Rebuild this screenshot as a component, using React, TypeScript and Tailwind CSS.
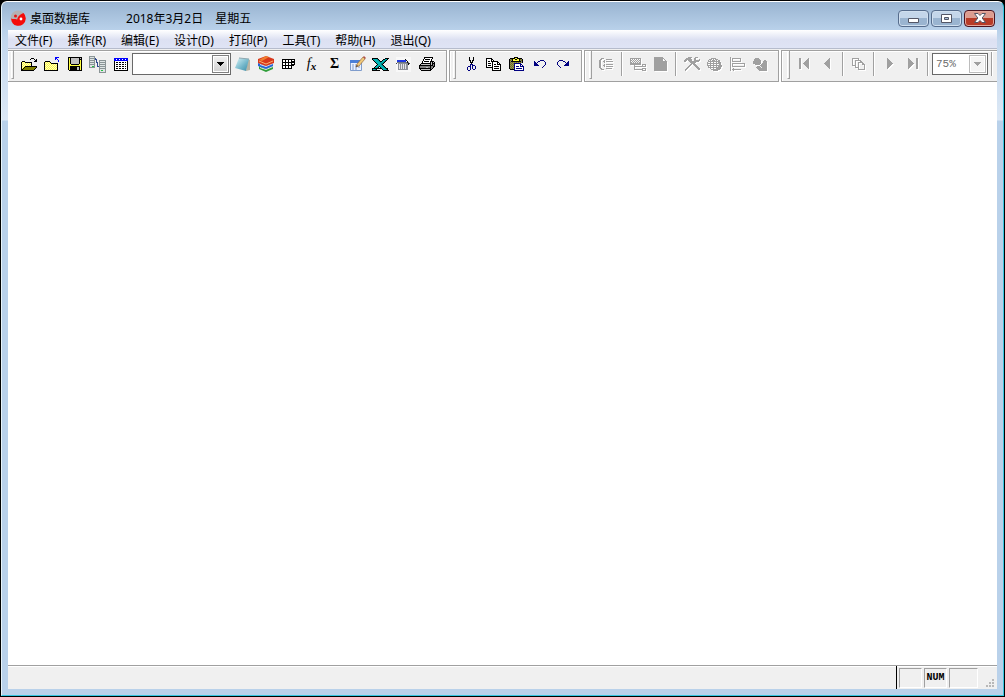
import React from 'react';

const palette: Record<string, string> = {
  k: '#000000',
  w: '#ffffff',
  y: '#ffff40',
  c: '#fdf8c8',
  o: '#808000',
  g: '#c0c0c0',
  d: '#808080',
  b: '#0000ff',
  n: '#000080',
  x: '#a0a0a0',
  t: '#008080',
  a: '#00b4b4',
};

// small bitmap icons, one character per pixel
const Pixels = ({ rows, className = '' }: { rows: string[]; className?: string }) => {
  const width = Math.max(...rows.map((r) => r.length));
  return (
    <svg
      width={width}
      height={rows.length}
      viewBox={`0 0 ${width} ${rows.length}`}
      shapeRendering="crispEdges"
      className={`shrink-0 ${className}`}
      aria-hidden="true"
    >
      {rows.map((row, y) =>
        [...row].map((ch, x) =>
          palette[ch] ? <rect key={`${x}-${y}`} x={x} y={y} width="1" height="1" fill={palette[ch]} /> : null
        )
      )}
    </svg>
  );
};

const openRows = [
  '..........kkk...',
  '.........k...k.k',
  '..............kk',
  '.kkk.........kkk',
  'kycykkkkkkk.....',
  'kcycycycyck.....',
  'kycycycycyk.....',
  'kcycycycyck.....',
  'kycykkkkkkkkkkkk',
  'kcykoooooooooook',
  'kykoooooooooook.',
  'kkoooooooooook..',
  'kkkkkkkkkkkkk...',
];

const folderRows = [
  '...........bbbb',
  '...........bb..',
  '...........b.b.',
  '..............b',
  '.kkkkk........b',
  'kycycyk........',
  'kcycycykkkkkkk.',
  'kycycycycycyck.',
  'kcycycycycycyk.',
  'kycycycycycyck.',
  'kcycycycycycyk.',
  'kycycycycycyck.',
  'kcycycycycycyk.',
  'kkkkkkkkkkkkkk.',
];

const saveRows = [
  'kkkkkkkkkkkkkk',
  'kykggggggggkgk',
  'kykggggggggkkk',
  'kykggggggggkyk',
  'kykggggggggkyk',
  'kykggggggggkyk',
  'kykggggggggkyk',
  'kyykkkkkkkkyyk',
  'kyyyyyyyyyyyyk',
  'kykkkkkkkkkkyk',
  'kykkkkkkkggkyk',
  'kykkkkkkkggkyk',
  'kykkkkkkkggkyk',
  '.kkkkkkkkkkkkk',
];

const tableRows = [
  'bbbbbbbbbbbbbb',
  'bbwbbwbbwbbwbb',
  'bbbbbbbbbbbbbb',
  'kwwwwwwwwwwwwk',
  'kwkkwkkwkkwkwk',
  'kwwwwwwwwwwwwk',
  'kwkkwkkwkkwkwk',
  'kwwwwwwwwwwwwk',
  'kwkkwkkwkkwkwk',
  'kwwwwwwwwwwwwk',
  'kwkkwkkwkkwkwk',
  'kwwwwwwwwwwwwk',
  'kkkkkkkkkkkkkk',
];

const gridRows = [
  'kkkkkkkkkkkkk',
  'kwwkwwkwwkwwk',
  'kwwkwwkwwkkkk',
  'kkkkkkkkkkkkk',
  'kwwkwwkwwkwwk',
  'kwwkwwkwwkkkk',
  'kkkkkkkkkkkk.',
  'kwwkwwkwwk...',
  'kwwkwwkwwk...',
  'kkkkkkkkkk...',
];

const cutRows = [
  '...k...k..',
  '...k...k..',
  '...k...k..',
  '...kk.kk..',
  '....k.k...',
  '....kkk...',
  '.....k....',
  '....nnn...',
  '....n.nnn.',
  '..nnn.n..n',
  '.n..n.n..n',
  '.n..n.n..n',
  '.n..n..nn.',
  '..nn......',
];

const copyRows = [
  'kkkkkk.........',
  'kwwwwkk........',
  'kwwwwkwk.......',
  'kwkkwkkkkkkk...',
  'kwwwwwkwwwwkk..',
  'kwkkkwkwwwwkwk.',
  'kwwwwwkwkkwkkkk',
  'kwkkkwkwwwwwwwk',
  'kwwwwwkwkkkkkwk',
  'kkkkkkkwwwwwwwk',
  '......kwkkkkkwk',
  '......kwwwwwwwk',
  '......kkkkkkkkk',
];

const pasteRows = [
  '.....kkkk.......',
  '.kkkkkyykkkkk...',
  'kdokyykkyykodk..',
  'kodkyyyyyykdok..',
  'kdkkkkkkkkkkdk..',
  'kododododododk..',
  'kdodonnnnnnn....',
  'kododnwwwwwnn...',
  'kdodonwwwwwnwn..',
  'kododnwnnnwnnnn.',
  'kdodonwwwwwwwwn.',
  'kododnwnnnnnnwn.',
  '.kkkknwwwwwwwwn.',
  '.....nnnnnnnnnn.',
];

const undoRows = [
  '......nnnn..',
  'n...nn....n.',
  'nn.n.......n',
  'nnn........n',
  'nnnn.......n',
  'nnnnn.....n.',
  '.........n..',
  '........n...',
];

const printerRows = [
  '.....kkkkkkkkk..',
  '.....kwwwwwwwk..',
  '....kwkkkkkwk...',
  '....kwwwwwwwk...',
  '...kwkkkkkwkkkk.',
  '...kwwwwwwwkgkgk',
  '..kkkkkkkkkkgkkk',
  '.kgggggggggkgkdk',
  'kkkkkkkkkkkkkkdk',
  'kddddddddddkddkk',
  'kddddddggddkddk.',
  'kkkkkkkkkkkkdk..',
  '.kgggggggggkk...',
  '..kkkkkkkkkk....',
];

const excelRows = [
  'kkkkkk.......kkkk',
  'kaaaatk....kkaak.',
  '.kaaaatk..kaatk..',
  '..kaaaatkkaatk...',
  '...kaaaataatk....',
  '....kaaaattk.....',
  '.....kaaatk......',
  '....kaaaaatk.....',
  '...kaatkaaatk....',
  '..kaatk.kaaatk...',
  'kkkkkkkkkkaaatkk.',
  'kaatk.....kaaatk.',
  'kkkkkkkk...kkkkkk',
];

const outlineRows = [
  '..xxx..........',
  '.xx....xxxxxx..',
  'xx...x.........',
  'xx..xx.xxxxxxx.',
  'xx...x.........',
  'xx.............',
  'xx...x.xxxxxxx.',
  'xx..xx.........',
  'xx...x.xxxxxxx.',
  'xx.............',
  '.xx....xxxxxx..',
  '..xxx..........',
];

const relationRows = [
  'xxxxxxxxxxx.....',
  'x.x.x.x.x.x.....',
  'xx.x.x.x.xx.....',
  'x.x.x.x.x.x.....',
  'xx.x.x.x.xx.....',
  'xxxxxxxxxxx.....',
  'xxxxxxxxxxx.xxxx',
  '....x.......x..x',
  '....xxxxxxxxxxxx',
  '....x...........',
  '....x.......xxxx',
  '....xxxxxxxxx..x',
  '............xxxx',
];

const pageRows = [
  'xxxxxxxxx....',
  'xxxxxxxxxx...',
  'xxxxxxxxx.x..',
  'xxxxxxxxx..x.',
  'xxxxxxxxxxxxx',
  'xxxxxxxxxxxxx',
  'xxxxxxxxxxxxx',
  'xxxxxxxxxxxxx',
  'xxxxxxxxxxxxx',
  'xxxxxxxxxxxxx',
  'xxxxxxxxxxxxx',
  'xxxxxxxxxxxxx',
  'xxxxxxxxxxxxx',
  'xxxxxxxxxxxxx',
];

const toolsRows = [
  '....xxxx...xxx..',
  '..xxxxx...xx....',
  '.xxxxxxx..xx...x',
  'xxx.xxxx..xxxxxx',
  'xx...xxxxxxxxxx.',
  '......xxxxxx....',
  '.......xxxx.....',
  '......xx.xxx....',
  '.....xx...xxx...',
  '....xx.....xxx..',
  '...xx.......xxx.',
  '..xx.........xxx',
  '.xx...........xx',
  '.x..............',
];

const globeRows = [
  '....xxxxx......',
  '..xxx.x.xxx....',
  '.x.x.xxx.x.xx..',
  '.xxxxxxxxxxxx..',
  'x..x..x..x.xxx.',
  'xxxxxxxxxxxxxx.',
  'x..x..x..x..xx.',
  'xxxxxxxxxxxxxxx',
  '.x.x..x..x.xxxx',
  '.xxxxxxxxxxxxx.',
  '...x..x..xxxxx.',
  '....xxxxxxxxx..',
  '......xxxxx....',
];

const alignRows = [
  'x..............',
  'x.xxxxxxxxx....',
  'x.x.......x....',
  'x.x.......x....',
  'x.xxxxxxxxx....',
  'x..............',
  'x.xxxxxxxxxxxxx',
  'x.x...........x',
  'x.x...........x',
  'x.xxxxxxxxxxxxx',
  'x..............',
  'x..x...........',
  'x.xxxxxxxxx....',
  'x..x...........',
];

const shapesRows = [
  '..xxxx.........',
  '.xxxxxx........',
  '.xxxxxxx...xx..',
  'xxxxxxxx..xxxx.',
  'xxxxxxxx..xxxx.',
  'xxxxxxxx.xxxxx.',
  '..xxxxx.xxxxxx.',
  '.......xxxxxxx.',
  '....xxx.xxxxxx.',
  '...xxxxx.xxxxx.',
  '....xxxxxxxxxx.',
  '.....xxxxxxxxx.',
  '......xxxxxxxx.',
];

const pagesRows = [
  'xxxxxxx.......',
  'x.....x.......',
  'x..xxxxxx.....',
  'x..x....xx....',
  'x..x..xxxxx...',
  'x..x..x...xx..',
  'x..x..x...xxx.',
  'xxxx..x.....x.',
  '...x..x.....x.',
  '...xxxx.....x.',
  '......x.....x.',
  '......xxxxxxx.',
];

const emboss = 'drop-shadow-[1px_1px_0_#ffffff]';

const YinYang = () => (
  <svg width="16" height="16" viewBox="0 0 16 16" className="shrink-0" aria-hidden="true">
    <circle cx="8" cy="8" r="7.5" fill="#b4b0b2" />
    <path d="M13.5 3A7.5 7.5 0 1 1 2 12.500C4 14 6.500 13 7 10.500C7.500 7 9 5 13.500 3Z" fill="#f40c0c" />
    <path d="M1 8.500C3 9.500 5 8.500 7 9.500L8 13.500L4 14.200A7.500 7.500 0 0 1 1 8.500Z" fill="#f40c0c" />
    <circle cx="5.500" cy="6" r="1.500" fill="#e01818" />
    <circle cx="11" cy="9" r="1.400" fill="#ffffff" />
  </svg>
);

const Servers = () => (
  <svg width="17" height="17" viewBox="0 0 17 17" shapeRendering="crispEdges" aria-hidden="true">
    <path d="M0 0h6v12H0z" fill="#8a9496" />
    <path d="M1 1h4v1H1zM1 3h4v1H1zM1 5h4v1H1zM1 7h4v1H1zM1 9h4v2H1z" fill="#dfe5e5" />
    <path d="M10 4h7v13h-7z" fill="#8a9496" />
    <path d="M11 5h5v1h-5zM11 7h5v1h-5zM11 9h5v1h-5zM11 11h5v1h-5zM11 13h5v3h-5z" fill="#dfe5e5" />
    <path d="M3 10h2v1H3zM12 14h2v1h-2z" fill="#20c040" />
    <path d="M6 2h1v1h1v3h1v4h1v1H8V7H7V4H6z" fill="#304a90" />
  </svg>
);

const Notepad = () => (
  <svg width="16" height="15" viewBox="0 0 16 15" aria-hidden="true">
    <defs>
      <linearGradient id="note" x1="0" y1="0" x2="1" y2="1">
        <stop offset="0" stopColor="#d8f4f8" />
        <stop offset="0.6" stopColor="#6fb4c8" />
        <stop offset="1" stopColor="#3f8ca6" />
      </linearGradient>
    </defs>
    <path d="M13 2l2 1v10l-4 1z" fill="#b8b4a4" />
    <path d="M4 1l10 1-3 12L0 11z" fill="url(#note)" />
    <path d="M4 1l10 1" stroke="#8fa8b0" />
  </svg>
);

const Books = () => (
  <svg width="16" height="16" viewBox="0 0 16 16" aria-hidden="true">
    <path d="M1 10l7 3 7-3v3l-7 3-7-3z" fill="#2f9e3a" />
    <path d="M2 11l6 2 7-3v1l-7 3-6-2z" fill="#e8f0e0" />
    <path d="M0 7l8 3 7-3v3l-7 3-8-3z" fill="#2465d8" />
    <path d="M2 8l6 2 7-3v1l-7 3-6-2z" fill="#dfe8f8" />
    <path d="M0 3l8-3 8 3v4l-8 3-8-3z" fill="#d8381c" />
    <path d="M1 5l7 3 7-3" fill="none" stroke="#f8b070" />
    <path d="M8 0l3 1-7 4-3-1z" fill="#f08030" />
  </svg>
);

const EditTable = () => (
  <svg width="17" height="16" viewBox="0 0 17 16" aria-hidden="true">
    <path d="M1.500 4.500h11v10h-11z" fill="#eaf2ff" stroke="#7f9ccc" />
    <path d="M1 4h12v3H1z" fill="#4a80d8" />
    <path d="M3 9h8M3 11h8M3 13h6" stroke="#7f9ccc" strokeDasharray="2 1" />
    <path d="M7 11l1-3 6-7 2 2-6 7z" fill="#f0c878" stroke="#8a5a30" strokeWidth="0.6" />
    <path d="M14 1l1-1 2 2-1 1z" fill="#b05048" />
    <path d="M7 11l1-2 1 1z" fill="#303030" />
  </svg>
);

const Basket = () => (
  <svg width="15" height="15" viewBox="0 0 15 15" shapeRendering="crispEdges" aria-hidden="true">
    <path d="M0 0h15v15H0z" fill="#f8f8f8" />
    <path d="M1 3h9v2H1z" fill="#2038e0" />
    <path d="M1 5h12v1H1z" fill="#707880" />
    <path d="M2 6h10v7H2z" fill="#8c9098" />
    <path d="M3 7h1v5H3zM5 7h1v5H5zM7 7h1v5H7zM9 7h1v5H9z" fill="#e4e4e8" />
    <path d="M9 2h1v1h1v1h1v2h1v2h-1V6h-1V4h-1V3H9z" fill="#101010" />
    <path d="M0 6h1v1H0zM13 6h1v1h-1z" fill="#404040" />
  </svg>
);

const Arrow = ({ left = false, bar = false }: { left?: boolean; bar?: boolean }) => (
  <svg
    width="11"
    height="12"
    viewBox="0 0 11 12"
    shapeRendering="crispEdges"
    className={emboss}
    fill="#a0a0a0"
    aria-hidden="true"
  >
    {left ? (
      <path d={bar ? 'M0 0h2v11H0zM10 0v11L4 6V5z' : 'M8 0v11L2 6V5z'} />
    ) : (
      <path d={bar ? 'M9 0h2v11H9zM1 0v11l6-5V5z' : 'M3 0v11l6-5V5z'} />
    )}
  </svg>
);

type Tool = { name: string; icon: React.ReactNode };

const fileTools: Tool[] = [
  { name: '打开', icon: <Pixels rows={openRows} /> },
  { name: '关闭', icon: <Pixels rows={folderRows} /> },
  { name: '保存', icon: <Pixels rows={saveRows} /> },
  { name: '连接', icon: <Servers /> },
  { name: '数据表', icon: <Pixels rows={tableRows} /> },
];

const dataTools: Tool[] = [
  { name: '记事本', icon: <Notepad /> },
  { name: '资料', icon: <Books /> },
  { name: '表格', icon: <Pixels rows={gridRows} /> },
  {
    name: '函数',
    icon: (
      <span className="flex items-end font-['Liberation_Serif',serif] text-sm leading-4 italic">
        f<span className="text-[11px] leading-3 font-bold">x</span>
      </span>
    ),
  },
  { name: '求和', icon: <span className="font-['Liberation_Serif',serif] text-sm leading-4 font-bold">Σ</span> },
  { name: '编辑表', icon: <EditTable /> },
  { name: '导出', icon: <Pixels rows={excelRows} /> },
  { name: '清理', icon: <Basket /> },
  { name: '打印', icon: <Pixels rows={printerRows} /> },
];

const editTools: Tool[] = [
  { name: '剪切', icon: <Pixels rows={cutRows} /> },
  { name: '复制', icon: <Pixels rows={copyRows} /> },
  { name: '粘贴', icon: <Pixels rows={pasteRows} /> },
  { name: '撤消', icon: <Pixels rows={undoRows} /> },
  { name: '重做', icon: <Pixels rows={undoRows} className="-scale-x-100" /> },
];

const menus = ['文件(F)', '操作(R)', '编辑(E)', '设计(D)', '打印(P)', '工具(T)', '帮助(H)', '退出(Q)'];

const ToolButton = ({ name, icon, disabled = false }: Tool & { disabled?: boolean }) => (
  <button type="button" aria-label={name} disabled={disabled} className="flex h-6 w-[23px] shrink-0 items-center justify-center">
    {icon}
  </button>
);

const Separator = () => (
  <div className="flex h-6 w-2 shrink-0 justify-center">
    <div className="w-0.5 border-r border-l border-r-white border-l-[#a0a0a0]" />
  </div>
);

const ToolGroup = ({ className = '', children }: { className?: string; children: React.ReactNode }) => (
  <div className={`flex h-8 items-start border border-[#a0a0a0] bg-[#f0f0f0] shadow-[inset_1px_1px_0_#ffffff] ${className}`}>
    <div className="mx-[3px] h-7 w-[3px] shrink-0 border-r border-b border-l border-[#a0a0a0] border-l-white" />
    <div className="flex items-center pt-px">{children}</div>
  </div>
);

const Combo = ({ label, value, className, disabled = false }: { label: string; value: string; className: string; disabled?: boolean }) => (
  <div className={`relative h-[22px] shrink-0 border border-[#696969] bg-white ${className}`}>
    <select
      aria-label={label}
      disabled={disabled}
      className="block h-full w-full appearance-none pl-[3px] font-['Liberation_Mono','Noto_Sans_CJK_SC',monospace] text-[11px] text-[#6d6d6d] outline-none"
    >
      <option>{value}</option>
    </select>
    <span
      className={`pointer-events-none absolute top-px right-px flex h-[18px] w-[17px] items-center justify-center border inset-ring inset-ring-white ${
        disabled ? 'border-[#bcbcbc] bg-[#f4f4f4]' : 'border-[#808080] bg-linear-to-b from-[#f2f2f2] to-[#d0d0d0]'
      }`}
    >
      <svg width="7" height="4" viewBox="0 0 7 4" shapeRendering="crispEdges" aria-hidden="true">
        <path d="M0 0h7L4 4H3z" fill={disabled ? '#a0a0a0' : '#000000'} />
      </svg>
    </span>
  </div>
);

const TitleBar = () => (
  <header className="flex h-7 items-center px-0.5 pt-1">
    <YinYang />
    <h1 className="flex pt-0.5 pl-1 text-xs leading-4">
      <span className="mr-9">桌面数据库</span>
      <span className="mr-3">2018年3月2日</span>
      <span>星期五</span>
    </h1>
    <div className="ml-auto flex gap-0.5">
      <button
        type="button"
        aria-label="最小化"
        className="flex h-[17px] w-[31px] items-end justify-center rounded-sm border border-[#566c8c] bg-linear-to-b from-[#c4d6ea] from-50% to-[#9ab4d0] to-50% pb-[3px] inset-ring inset-ring-[#d0dfef]"
      >
        <svg width="11" height="5" viewBox="0 0 11 5" aria-hidden="true">
          <path d="M0.500 0.500h10v4h-10z" fill="#ffffff" stroke="#535666" />
        </svg>
      </button>
      <button
        type="button"
        aria-label="最大化"
        className="flex h-[17px] w-[31px] items-center justify-center rounded-sm border border-[#566c8c] bg-linear-to-b from-[#c4d6ea] from-50% to-[#9ab4d0] to-50% inset-ring inset-ring-[#d0dfef]"
      >
        <svg width="11" height="9" viewBox="0 0 11 9" aria-hidden="true">
          <path d="M0.500 0.500h10v8h-10z" fill="#ffffff" stroke="#535666" />
          <path d="M3.500 3.500h4v2h-4z" fill="#a8bed8" stroke="#535666" />
        </svg>
      </button>
      <button
        type="button"
        aria-label="关闭窗口"
        className="flex h-[17px] w-[31px] items-center justify-center rounded-sm border border-[#4c1420] bg-linear-to-b from-[#dc9c90] from-50% to-[#b83c28] to-50% inset-ring inset-ring-[#e4a89c]"
      >
        <svg width="12" height="10" viewBox="0 0 12 10" aria-hidden="true">
          <path
            d="M0.500 0.500h3.500L6 2.500 8 0.500h3.500L8.200 5l3.300 4.500H8L6 7.500 4 9.500H0.500L3.800 5z"
            fill="#ffffff"
            stroke="#535666"
          />
        </svg>
      </button>
    </div>
  </header>
);

const MenuBar = () => (
  <nav className="h-5 border-b border-[#f0f0f0] bg-linear-to-b from-white via-[#dde1f2] via-50% to-[#dfe4f5] shadow-[inset_0_-1px_0_#b6bccc]">
    <ul className="flex gap-[15px] pl-[7px] text-xs">
      {menus.map((menu) => (
        <li key={menu}>
          <button type="button" className="block h-5 pt-px leading-5">
            {menu}
          </button>
        </li>
      ))}
    </ul>
  </nav>
);

const Toolbar = () => (
  <div className="flex gap-0.5 overflow-hidden bg-white" role="toolbar">
    <ToolGroup className="w-[439px] shrink-0 border-l-0">
      {fileTools.map((tool) => (
        <ToolButton key={tool.name} {...tool} />
      ))}
      <Combo label="查询" value="" className="w-[99px]" />
      {dataTools.map((tool) => (
        <ToolButton key={tool.name} {...tool} />
      ))}
    </ToolGroup>
    <ToolGroup className="w-[133px] shrink-0">
      {editTools.map((tool) => (
        <ToolButton key={tool.name} {...tool} />
      ))}
    </ToolGroup>
    <ToolGroup className="w-[195px] shrink-0 pl-px">
      <ToolButton disabled name="大纲" icon={<Pixels rows={outlineRows} className={emboss} />} />
      <Separator />
      <ToolButton disabled name="关系" icon={<Pixels rows={relationRows} className={emboss} />} />
      <ToolButton disabled name="页面" icon={<Pixels rows={pageRows} className={emboss} />} />
      <Separator />
      <ToolButton disabled name="工具" icon={<Pixels rows={toolsRows} className={emboss} />} />
      <ToolButton disabled name="网络" icon={<Pixels rows={globeRows} className={emboss} />} />
      <ToolButton disabled name="对齐" icon={<Pixels rows={alignRows} className={emboss} />} />
      <ToolButton disabled name="形状" icon={<Pixels rows={shapesRows} className={emboss} />} />
    </ToolGroup>
    <ToolGroup className="flex-1 border-r-0 pl-0.5">
      <ToolButton disabled name="首页" icon={<Arrow left bar />} />
      <ToolButton disabled name="上一页" icon={<Arrow left />} />
      <Separator />
      <ToolButton disabled name="多页" icon={<Pixels rows={pagesRows} className={emboss} />} />
      <Separator />
      <ToolButton disabled name="下一页" icon={<Arrow />} />
      <ToolButton disabled name="末页" icon={<Arrow bar />} />
      <Separator />
      <Combo label="缩放" value="75%" className="w-14" disabled />
      <Separator />
    </ToolGroup>
  </div>
);

const StatusBar = () => (
  <footer className="flex h-6 border-t border-[#a0a0a0] bg-[#f0f0f0] shadow-[inset_0_1px_0_#ffffff]">
    <div className="flex-1 border-r border-black" />
    <div className="flex gap-0.5 pt-0.5 pb-px pl-0.5 font-['Liberation_Mono',monospace] text-[10px] leading-[18px] font-bold">
      <div className="w-[23px] border border-[#a0a0a0] border-r-white border-b-white" />
      <div className="w-[23px] border border-[#a0a0a0] border-r-white border-b-white text-center">NUM</div>
      <div className="w-[29px] border border-[#a0a0a0] border-r-white border-b-white" />
    </div>
    <div className="flex w-[19px] items-end justify-end pr-0.5 pb-px">
      <svg width="9" height="9" viewBox="0 0 9 9" shapeRendering="crispEdges" fill="#b8b8b8" aria-hidden="true">
        <path d="M6 0h2v2H6zM3 3h2v2H3zM6 3h2v2H6zM0 6h2v2H0zM3 6h2v2H3zM6 6h2v2H6z" />
      </svg>
    </div>
  </footer>
);

const App = () => {
  return (
    <div className="flex min-h-screen flex-col bg-black font-['Noto_Sans','Noto_Sans_CJK_SC',sans-serif] text-black">
      <div className="flex flex-1 flex-col rounded-t-md border border-black">
        <div className="flex flex-1 flex-col rounded-t-md border border-t-white border-r-[#35c6e0] border-b-[#35c6e0] border-l-[#e8f4fa] bg-[linear-gradient(to_bottom,#99b4d1_0px,#b9d1ea_28px,#c4d8ee_40px,#dce8f5_118px,#b9d1ea_119px)] px-1.5 pb-1.5">
          <TitleBar />
          <MenuBar />
          <Toolbar />
          <main className="flex-1 bg-white" />
          <StatusBar />
        </div>
      </div>
    </div>
  );
};

export default App;
